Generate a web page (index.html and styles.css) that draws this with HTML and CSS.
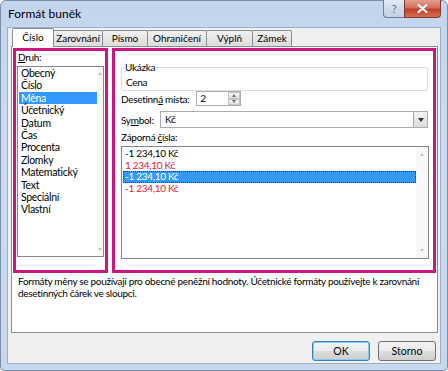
FILE: index.html
```html
<!DOCTYPE html>
<html>
<head>
  <meta charset="utf-8" />
  <title>Formát buněk</title>
  <link rel="stylesheet" href="styles.css">
</head>
<body>
  <div class="window">
    <div class="titlebar">
      <span class="title">Formát buněk</span>
      <div class="caption">
        <span class="cap help">?</span>
        <span class="cap close">
          <svg width="11" height="9" viewBox="0 0 11 9"><path d="M1.5 1 L9.5 8 M9.5 1 L1.5 8" stroke="#fff" stroke-width="2.2" stroke-linecap="round"/></svg>
        </span>
      </div>
    </div>
    <div class="client">
      <div class="tabs">
        <span class="tab active w1">Číslo</span>
        <span class="tab w2">Zarovnání</span>
        <span class="tab w3">Písmo</span>
        <span class="tab w4">Ohraničení</span>
        <span class="tab w5">Výplň</span>
        <span class="tab w6">Zámek</span>
      </div>
      <div class="panel">
        <div class="boxes">
          <div class="mark left">
            <div class="label"><u>D</u>ruh:</div>
            <div class="list cat">
              <ul>
                <li>Obecný</li>
                <li>Číslo</li>
                <li class="sel">Měna</li>
                <li>Účetnický</li>
                <li>Datum</li>
                <li>Čas</li>
                <li>Procenta</li>
                <li>Zlomky</li>
                <li>Matematický</li>
                <li>Text</li>
                <li>Speciální</li>
                <li>Vlastní</li>
              </ul>
              <div class="scroll">
                <span class="arr up"></span>
                <span class="arr down"></span>
              </div>
            </div>
          </div>
          <div class="mark right">
            <div class="sample">
              <span class="legend">Ukázka</span>
              <div class="sample-value">Cena</div>
            </div>
            <div class="row">
              <span class="label">Desetinn<u>á</u> místa:</span>
              <div class="spin">
                <span class="spin-value">2</span>
                <div class="spin-btns">
                  <span class="sb"><span class="arr up"></span></span>
                  <span class="sb"><span class="arr down"></span></span>
                </div>
              </div>
            </div>
            <div class="row">
              <span class="label sym">Sy<u>m</u>bol:</span>
              <div class="select">
                <span class="select-value">Kč</span>
                <span class="drop"><span class="arr down dark"></span></span>
              </div>
            </div>
            <div class="label neg-label">Záporná <u>č</u>ísla:</div>
            <div class="list neg">
              <ul>
                <li>-1 234,10 Kč</li>
                <li class="red">1 234,10 Kč</li>
                <li class="sel focus">-1 234,10 Kč</li>
                <li class="red">-1 234,10 Kč</li>
              </ul>
              <div class="scroll">
                <span class="arr up"></span>
                <span class="arr down"></span>
              </div>
            </div>
          </div>
        </div>
        <p class="desc">Formáty měny se používají pro obecné peněžní hodnoty. Účetnické formáty používejte k zarovnání desetinných čárek ve sloupci.</p>
      </div>
      <div class="buttons">
        <button class="btn default">OK</button>
        <button class="btn">Storno</button>
      </div>
    </div>
  </div>
</body>
</html>
```

FILE: styles.css
```css
* {
  box-sizing: border-box;
}

html,
body {
  margin: 0;
  padding: 0;
  background: #fff;
}

body {
  font-family: Lato, "Noto Sans", sans-serif;
  font-size: 10px;
  letter-spacing: -0.3px;
  color: #000;
}

ul {
  list-style: none;
  margin: 0;
  padding: 0;
}

u {
  text-decoration: underline;
  text-underline-offset: 1px;
}

.window {
  width: 448px;
  height: 371px;
  border: 1px solid #7b8fa9;
  border-radius: 6px 6px 4px 4px;
  background: linear-gradient(#c3d5ed, #cddcf0 40%, #c6d7ee);
  display: flex;
  flex-direction: column;
}

.titlebar {
  height: 26px;
  display: flex;
  justify-content: space-between;
  align-items: flex-start;
  padding-left: 7px;
}

.title {
  font-size: 12px;
  letter-spacing: 0;
  line-height: 25px;
}

.caption {
  display: flex;
  margin-right: 6px;
  margin-top: -1px;
}

.cap {
  height: 18px;
  display: flex;
  align-items: center;
  justify-content: center;
  border: 1px solid #6d7f99;
  border-top: none;
}

.help {
  width: 21px;
  border-right: none;
  border-radius: 0 0 0 4px;
  background: linear-gradient(#e4ebf4, #cfdbea 50%, #c3d1e4);
  color: #5c6c84;
  font-size: 11px;
}

.close {
  width: 37px;
  border-radius: 0 0 4px 0;
  border-color: #7a3a2e;
  background: linear-gradient(#e6a08f, #d2705c 45%, #c0402a 55%, #d4704f);
}

.client {
  flex: 1;
  margin: 0 6px 6px;
  border: 1px solid #9cb0c9;
  background: #f0f0f0;
  display: flex;
  flex-direction: column;
}

.tabs {
  display: flex;
  align-items: flex-end;
  height: 18px;
  padding-left: 4px;
  letter-spacing: 0;
}

.tab {
  height: 16px;
  border: 1px solid #898c95;
  border-bottom: none;
  margin-left: -1px;
  background: linear-gradient(#f2f2f2, #e6e6e6 50%, #dcdcdc);
  text-align: center;
  line-height: 14px;
  border-radius: 2px 2px 0 0;
}

.tab.active {
  height: 19px;
  margin-bottom: -1px;
  background: #fff;
  position: relative;
  z-index: 1;
  line-height: 17px;
  margin-left: 0;
}

.w1 { width: 42px; }
.w2 { width: 50px; }
.w3 { width: 46px; }
.w4 { width: 60px; }
.w5 { width: 47px; }
.w6 { width: 40px; }

.panel {
  margin-left: 3px;
  width: 427px;
  height: 287px;
  background: #fff;
  border: 1px solid #898c95;
  padding: 1px 0 0 1px;
}

.boxes {
  display: flex;
  gap: 4px;
}

.mark {
  border: 3px solid #cc1682;
  height: 225px;
}

.mark.left {
  width: 95px;
  padding: 0 0 0 1px;
}

.mark.right {
  width: 324px;
  padding: 16px 5px 0 5px;
}

.label {
  line-height: 12px;
  white-space: nowrap;
}

.left > .label {
  padding-left: 1px;
}

.list {
  border: 1px solid #828790;
  display: flex;
  background: #fff;
}

.list ul {
  flex: 1;
  padding-left: 1px;
}

.list li {
  padding-left: 2px;
  white-space: nowrap;
}

.list .sel {
  background: #3399ff;
  color: #fff;
}

.cat {
  width: 87px;
  height: 191px;
  margin-top: 3px;
}

.cat li {
  line-height: 12.4px;
  font-size: 10.5px;
}

.scroll {
  display: flex;
  flex-direction: column;
  justify-content: space-between;
  align-items: center;
  padding: 5px 0;
  background: #f7f7f7;
}

.cat .scroll {
  width: 6px;
}

.arr {
  width: 0;
  height: 0;
  border-left: 2.5px solid transparent;
  border-right: 2.5px solid transparent;
}

.arr.up {
  border-bottom: 3px solid #c6c6c6;
}

.arr.down {
  border-top: 3px solid #c6c6c6;
}

.arr.dark {
  border-left-width: 3.5px;
  border-right-width: 3.5px;
  border-top: 4px solid #333;
}

.sample {
  position: relative;
  width: 307px;
  height: 24px;
  border: 1px solid #d5dfe5;
  border-radius: 2px;
  padding: 8px 0 0 4px;
  margin-left: 1px;
}

.legend {
  position: absolute;
  top: -7px;
  left: 2px;
  padding: 0 1px;
  background: #fff;
  line-height: 12px;
}

.sample-value {
  line-height: 13px;
}

.row {
  display: flex;
  align-items: center;
  margin-left: 1px;
}

.row:first-of-type {
  margin-top: 4px;
}

.spin {
  margin-left: 7px;
  width: 45px;
  height: 15px;
  border: 1px solid #abadb3;
  display: flex;
  justify-content: space-between;
}

.spin-value {
  padding-left: 3px;
  line-height: 13px;
}

.spin-btns {
  width: 12px;
  display: flex;
  flex-direction: column;
}

.sb {
  flex: 1;
  display: flex;
  align-items: center;
  justify-content: center;
  background: linear-gradient(#f4f4f4, #e3e3e3);
  border: 1px solid #c4c4c4;
}

.sb .arr.up {
  border-bottom-color: #6f6f6f;
}

.sb .arr.down {
  border-top-color: #6f6f6f;
}

.row + .row {
  margin-top: 5px;
}

.sym {
  width: 39px;
}

.select {
  width: 268px;
  height: 17px;
  border: 1px solid #abadb3;
  display: flex;
  justify-content: space-between;
}

.select-value {
  padding-left: 4px;
  line-height: 15px;
}

.drop {
  width: 14px;
  display: flex;
  align-items: center;
  justify-content: center;
  background: linear-gradient(#f3f3f3, #dcdcdc);
  border-left: 1px solid #a8a8a8;
}

.neg-label {
  margin-top: 3px;
  margin-left: 1px;
}

.neg {
  width: 308px;
  height: 113px;
  margin-top: 3px;
  margin-left: 1px;
}

.neg ul {
  padding-top: 1px;
}

.neg li {
  line-height: 11.5px;
}

.neg li.red {
  color: #e8202c;
}

.neg li.focus {
  outline: 1px dotted #1a3f73;
  outline-offset: -1px;
}

.neg .scroll {
  width: 12px;
  padding: 6px 0;
}

.desc {
  margin: 2px 0 0 5px;
  line-height: 12px;
  width: 410px;
}

.buttons {
  display: flex;
  justify-content: flex-end;
  gap: 8px;
  margin-top: 8px;
  padding-right: 4px;
}

.btn {
  width: 58px;
  height: 20px;
  font-family: inherit;
  font-size: 10.5px;
  padding: 0;
  border: 1px solid #707070;
  border-radius: 3px;
  background: linear-gradient(#f2f2f2, #ebebeb 50%, #dddddd 51%, #cfcfcf);
}

.btn.default {
  border-color: #3c7fb1;
  box-shadow: inset 0 0 0 1px #7fd1f3;
}
```
